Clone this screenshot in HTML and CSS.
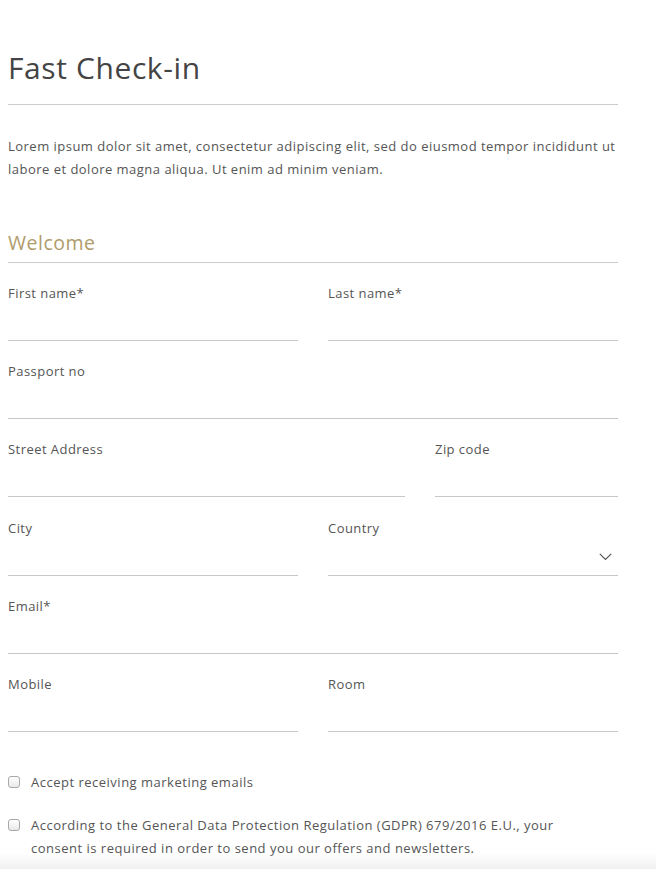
FILE: index.html
```html
<!DOCTYPE html>
<html lang="en">
<head>
<meta charset="utf-8">
<title>Fast Check-in</title>
<link rel="stylesheet" href="styles.css">
</head>
<body>
<main class="page">
  <h1 class="title">Fast Check-in</h1>
  <p class="intro">Lorem ipsum dolor sit amet, consectetur adipiscing elit, sed do eiusmod tempor incididunt ut labore et dolore magna aliqua. Ut enim ad minim veniam.</p>

  <h2 class="section">Welcome</h2>

  <form class="form">
    <div class="row half">
      <div class="field"><label>First name*</label><input type="text"></div>
      <div class="field"><label>Last name*</label><input type="text"></div>
    </div>
    <div class="row full">
      <div class="field"><label>Passport no</label><input type="text"></div>
    </div>
    <div class="row wide">
      <div class="field"><label>Street Address</label><input type="text"></div>
      <div class="field"><label>Zip code</label><input type="text"></div>
    </div>
    <div class="row half">
      <div class="field"><label>City</label><input type="text"></div>
      <div class="field"><label>Country</label>
        <div class="select">
          <svg class="chev" width="13" height="8" viewBox="0 0 13 8"><path d="M0.8 0.8 L6.5 6.5 L12.2 0.8" fill="none" stroke="#555" stroke-width="1.2"/></svg>
        </div>
      </div>
    </div>
    <div class="row full">
      <div class="field"><label>Email*</label><input type="text"></div>
    </div>
    <div class="row half">
      <div class="field"><label>Mobile</label><input type="text"></div>
      <div class="field"><label>Room</label><input type="text"></div>
    </div>

    <div class="checks">
      <label class="check"><span class="box"></span><span class="ctext">Accept receiving marketing emails</span></label>
      <label class="check"><span class="box"></span><span class="ctext">According to the General Data Protection Regulation (GDPR) 679/2016 E.U., your consent is required in order to send you our offers and newsletters.</span></label>
    </div>
  </form>
</main>
<div class="fade"></div>
</body>
</html>
```

FILE: styles.css
```css
html, body {
  margin: 0;
  padding: 0;
  background: #fff;
}
body {
  font-family: "Open Sans", "DejaVu Sans", sans-serif;
  color: #555;
}
.page {
  width: 610px;
  padding: 50px 8px 40px;
}
.title {
  margin: 0;
  font-size: 30px;
  line-height: 36px;
  font-weight: 400;
  color: #444;
  letter-spacing: 0.6px;
  padding-bottom: 18px;
  border-bottom: 1px solid #ccc;
}
.intro {
  margin: 30px 0 0;
  font-size: 13px;
  line-height: 23px;
  color: #555;
  letter-spacing: 0.48px;
}
.section {
  margin: 49px 0 0;
  font-size: 19.5px;
  line-height: 26px;
  font-weight: 400;
  color: #b09b6b;
  letter-spacing: 0.5px;
  padding-bottom: 6px;
  border-bottom: 1px solid #ccc;
}
.form {
  margin-top: 20px;
}
.row {
  display: grid;
  column-gap: 30px;
}
.row.half { grid-template-columns: 1fr 1fr; }
.row.full { grid-template-columns: 1fr; }
.row.wide { grid-template-columns: 397px 1fr; }
.field {
  display: flex;
  flex-direction: column;
  min-width: 0;
  margin-bottom: 20.2px;
}
.field label {
  font-size: 13px;
  line-height: 20px;
  color: #555;
  letter-spacing: 0.45px;
}
.field input, .select {
  width: 100%;
  height: 37px;
  border: 0;
  border-bottom: 1px solid #c8c8c8;
  padding: 0;
  margin: 0;
  outline: none;
  background: transparent;
  box-sizing: content-box;
  font: inherit;
}
.select {
  display: flex;
  align-items: center;
  justify-content: flex-end;
}
.chev {
  margin-right: 6px;
  margin-top: 2px;
}
.checks {
  margin-top: 19px;
  display: flex;
  flex-direction: column;
  gap: 20px;
}
.check {
  display: flex;
  align-items: flex-start;
  font-size: 13px;
  line-height: 23px;
  color: #555;
  letter-spacing: 0.5px;
}
.box {
  flex: none;
  width: 10px;
  height: 10px;
  margin-top: 5px;
  margin-right: 11px;
  border: 1px solid #a8a8a8;
  border-radius: 3px;
  background: linear-gradient(#fff, #e9e9e9);
}
.ctext {
  max-width: 530px;
}
.fade {
  position: fixed;
  left: 0;
  right: 0;
  bottom: 0;
  height: 16px;
  background: linear-gradient(rgba(240,240,240,0), #f0f0f0);
  pointer-events: none;
}
```
